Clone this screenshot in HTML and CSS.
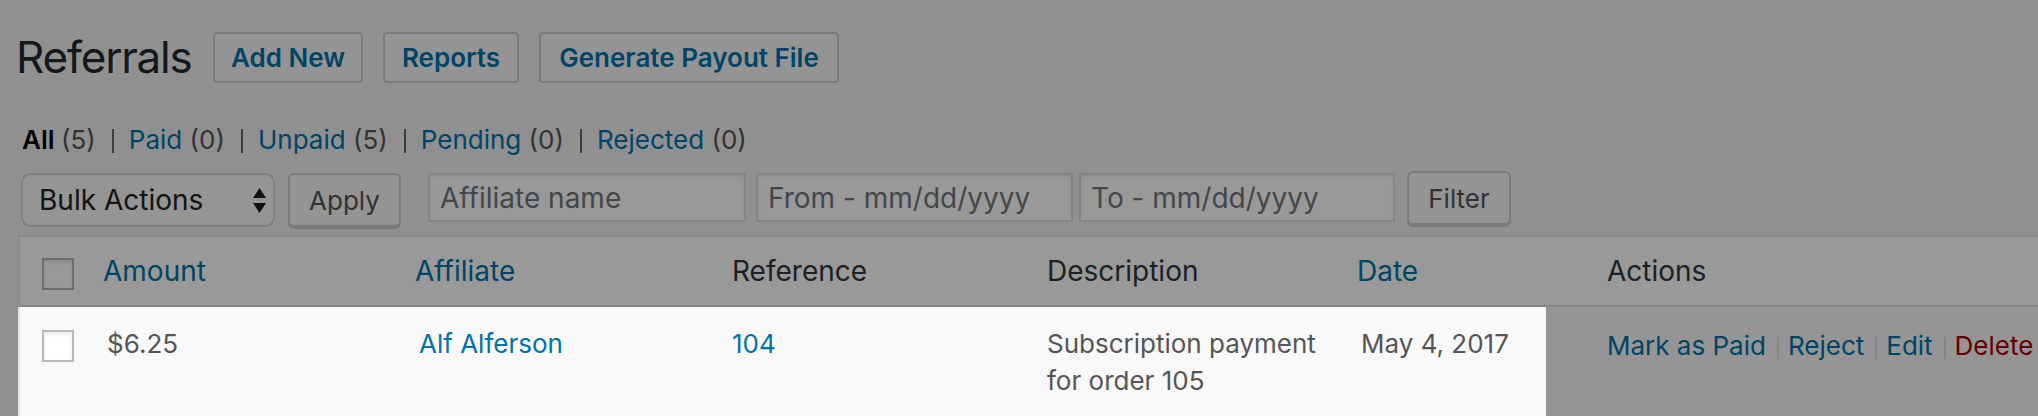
FILE: index.html
```html
<!DOCTYPE html>
<html lang="en">
<head>
<meta charset="utf-8">
<title>Referrals</title>
<link rel="stylesheet" href="styles.css">
</head>
<body>
<div class="wrap">
  <div class="page-head">
    <h1 class="page-title">Referrals</h1>
    <a class="title-action btn-add" href="#">Add New</a>
    <a class="title-action btn-reports" href="#">Reports</a>
    <a class="title-action btn-payout" href="#">Generate Payout File</a>
  </div>

  <ul class="subsubsub">
    <li><a class="current" href="#">All <span class="count">(5)</span></a><span class="sep"></span></li>
    <li><a href="#">Paid <span class="count">(0)</span></a><span class="sep"></span></li>
    <li><a href="#">Unpaid <span class="count">(5)</span></a><span class="sep"></span></li>
    <li><a href="#">Pending <span class="count">(0)</span></a><span class="sep"></span></li>
    <li><a href="#">Rejected <span class="count">(0)</span></a></li>
  </ul>

  <div class="tablenav">
    <div class="select">
      <select class="select-native" aria-label="Bulk Actions"><option>Bulk Actions</option></select>
      <svg class="select-arrows" viewBox="0 0 13 25" aria-hidden="true"><path d="M6.5 0 L13 10 L0 10 Z M0 15 L13 15 L6.5 25 Z" fill="#1d1d1d"/></svg>
    </div>
    <button class="button apply" type="button">Apply</button>
    <input class="field field-affiliate" type="text" placeholder="Affiliate name">
    <input class="field field-from" type="text" placeholder="From - mm/dd/yyyy">
    <input class="field field-to" type="text" placeholder="To - mm/dd/yyyy">
    <button class="button filter" type="button">Filter</button>
  </div>

  <table class="list">
    <thead>
      <tr>
        <th class="col-cb w-cb"><input class="cb" type="checkbox" aria-label="Select all"></th>
        <th class="sortable w-amount"><a href="#">Amount</a></th>
        <th class="sortable w-affiliate"><a href="#">Affiliate</a></th>
        <th class="w-reference">Reference</th>
        <th class="w-description">Description</th>
        <th class="sortable w-date"><a href="#">Date</a></th>
        <th class="w-actions">Actions</th>
      </tr>
    </thead>
    <tbody>
      <tr>
        <td class="col-cb"><input class="cb" type="checkbox" aria-label="Select referral"></td>
        <td>$6.25</td>
        <td><a href="#">Alf Alferson</a></td>
        <td><a href="#">104</a></td>
        <td>Subscription payment for order 105</td>
        <td>May 4, 2017</td>
        <td class="row-actions"><a href="#">Mark as Paid</a><span class="bar"></span><a href="#">Reject</a><span class="bar"></span><a href="#">Edit</a><span class="bar"></span><a class="delete" href="#">Delete</a></td>
      </tr>
    </tbody>
  </table>

  <div class="spotlight" aria-hidden="true"></div>
</div>
</body>
</html>
```

FILE: styles.css
```css
html, body {
  margin: 0;
  padding: 0;
}

body {
  background: #f1f1f1;
  font-family: "Inter", "Roboto", "Liberation Sans", sans-serif;
  color: #444;
  overflow: hidden;
}

.wrap {
  position: relative;
  padding: 32px 0 0 16px;
}

/* heading row */
.page-head {
  display: flex;
  align-items: center;
  height: 51px;
}

.page-title {
  flex: 0 0 197px;
  margin: 0;
  font-size: 44px;
  font-weight: 400;
  line-height: 51px;
  color: #23282d;
  letter-spacing: -1.2px;
}

.title-action {
  box-sizing: border-box;
  height: 51px;
  margin-right: 20px;
  display: flex;
  align-items: center;
  justify-content: center;
  border: 2px solid #ccc;
  border-radius: 4px;
  background: #f7f7f7;
  color: #0073aa;
  font-size: 26px;
  font-weight: 600;
  text-decoration: none;
}

.btn-add { width: 150px; }
.btn-reports { width: 136px; }
.btn-payout { width: 300px; }

/* status filter links */
.subsubsub {
  list-style: none;
  display: flex;
  margin: 37px 0 0 6px;
  padding: 0;
  height: 40px;
  line-height: 40px;
  font-size: 26px;
  color: #666;
}

.subsubsub a {
  color: #0073aa;
  text-decoration: none;
}

.subsubsub a.current {
  color: #000;
  font-weight: 600;
}

.subsubsub .count {
  color: #555;
  font-weight: 400;
}

.subsubsub .sep {
  display: inline-block;
  width: 2px;
  height: 24px;
  background: #666;
  vertical-align: -4px;
  margin: 0 15px 0 16px;
}

/* toolbar */
.tablenav {
  display: flex;
  align-items: flex-start;
  margin-top: 11px;
  height: 56px;
}

.select {
  box-sizing: border-box;
  display: flex;
  align-items: center;
  width: 254px;
  height: 54px;
  margin: 2px 0 0 5px;
  padding: 0 7px 0 16px;
  border: 2px solid #d3d3d3;
  border-radius: 10px;
  background: #f8f8f8;
}

.select-native {
  flex: 1;
  min-width: 0;
  -webkit-appearance: none;
  appearance: none;
  border: 0;
  background: transparent;
  font-family: inherit;
  font-size: 28px;
  color: #222;
  padding: 0;
  margin: 0;
  outline: none;
}

.select-arrows {
  flex: none;
  width: 13px;
  height: 25px;
}

.button {
  box-sizing: border-box;
  height: 54px;
  padding: 0;
  border: 2px solid #ccc;
  border-radius: 6px;
  background: #f7f7f7;
  box-shadow: 0 2px 0 #ccc;
  color: #555;
  font-family: inherit;
  font-size: 26px;
}

.apply {
  width: 113px;
  margin: 2px 0 0 13px;
}

.filter {
  width: 104px;
  margin: 0 0 0 12px;
}

.field {
  box-sizing: border-box;
  height: 49px;
  margin-top: 2px;
  padding: 0 0 0 10px;
  border: 2px solid #ddd;
  background: #fff;
  box-shadow: inset 0 2px 4px rgba(0, 0, 0, 0.07);
  font-family: inherit;
  font-size: 28px;
  color: #32373c;
  outline: none;
}

.field::placeholder {
  color: #72777c;
}

.field-affiliate { width: 318px; margin-left: 27px; }
.field-from { width: 317px; margin-left: 10px; }
.field-to { width: 316px; margin-left: 6px; }

/* table */
.list {
  margin: 8px 0 0 2px;
  width: 2300px;
  table-layout: fixed;
  border-collapse: separate;
  border-spacing: 0;
  border: 2px solid #e5e5e5;
  background: #fff;
}

.list th,
.list td {
  box-sizing: border-box;
  text-align: left;
  font-weight: 400;
}

.w-cb { width: 67px; }
.w-amount { width: 312px; }
.w-affiliate { width: 313px; }
.w-reference { width: 315px; }
.w-description { width: 314px; }
.w-date { width: 246px; }

.list thead th {
  height: 70px;
  padding: 0 0 0 20px;
  border-bottom: 2px solid #e1e1e1;
  font-size: 28px;
  line-height: 40px;
  color: #32373c;
  vertical-align: middle;
}

.list thead th.sortable {
  padding-left: 0;
}

.list thead th.sortable a {
  display: inline-block;
  padding-left: 16px;
  color: #0073aa;
  text-decoration: none;
}

.list thead th.col-cb {
  padding: 21px 0 0 22px;
  vertical-align: top;
}

.cb {
  display: block;
  -webkit-appearance: none;
  appearance: none;
  box-sizing: border-box;
  width: 32px;
  height: 32px;
  margin: 0;
  border: 2px solid #b4b9be;
  background: #fff;
  box-shadow: inset 0 2px 4px rgba(0, 0, 0, 0.1);
}

.list tbody tr {
  background: #f9f9f9;
}

.list tbody td {
  padding: 18px 20px;
  font-size: 26px;
  line-height: 37px;
  color: #555;
  vertical-align: top;
}

.list tbody td.col-cb {
  padding: 23px 0 0 22px;
}

.list tbody a {
  color: #0073aa;
  text-decoration: none;
}

.list tbody td.row-actions {
  white-space: nowrap;
  padding-top: 20px;
}

.list tbody .row-actions a.delete {
  color: #a00;
}

.row-actions .bar {
  display: inline-block;
  width: 2px;
  height: 22px;
  background: #ddd;
  vertical-align: -4px;
  margin: 0 9px 0 11px;
}

/* guided-tour spotlight: dims everything except the highlighted cells */
.spotlight {
  position: absolute;
  left: 18px;
  top: 307px;
  width: 1528px;
  height: 160px;
  box-shadow: 0 0 0 4000px rgba(0, 0, 0, 0.4);
  pointer-events: none;
}
```
